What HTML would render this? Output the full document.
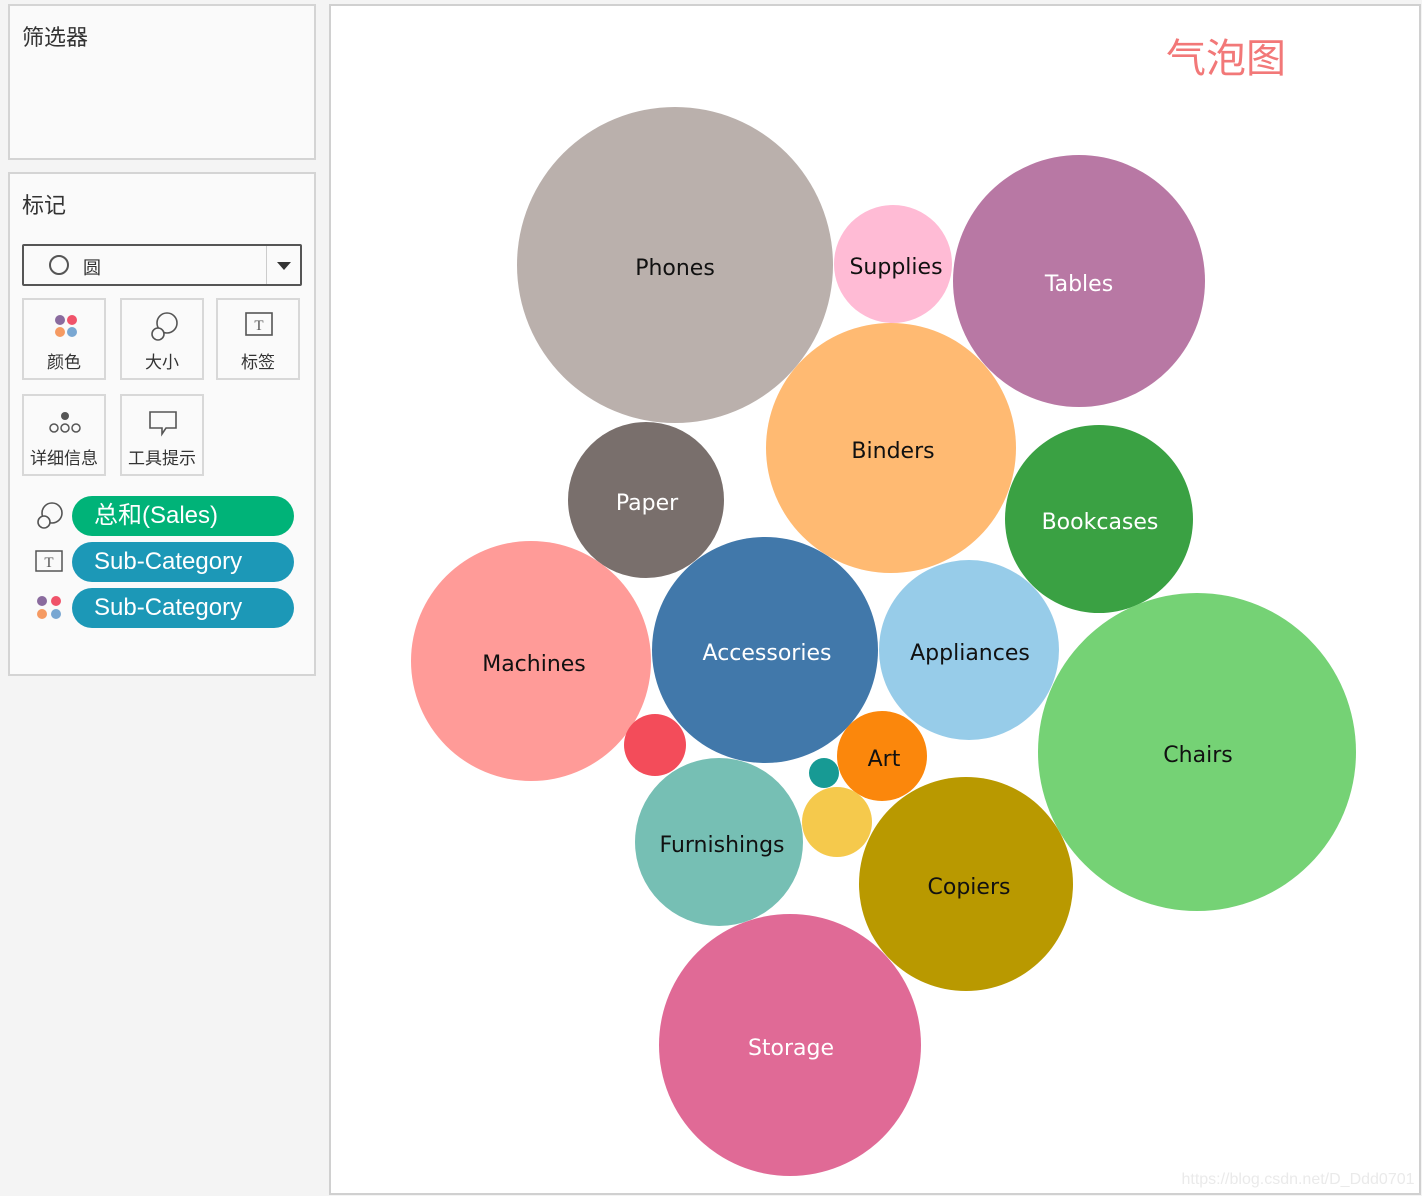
<!DOCTYPE html>
<html><head><meta charset="utf-8"><style>
body{margin:0;width:1422px;height:1196px;background:#f4f4f4;position:relative;overflow:hidden;font-family:"Liberation Sans","Noto Sans CJK SC",sans-serif;color:#333}
.box{position:absolute;background:#fafafa;border:2px solid #d4d4d4;box-sizing:border-box}
.t{position:absolute;font-size:22px;color:#333}
.card{position:absolute;width:84px;height:82px;border:2px solid #d8d8d8;box-sizing:border-box;background:#fafafa;text-align:center;font-size:17px}
.card span{position:absolute;left:0;right:0;top:53px;line-height:20px}
.card svg{position:absolute;left:22px;top:8px}
.pill{position:absolute;left:72px;width:222px;height:40px;border-radius:20px;color:#fff;font-size:24px;line-height:40px;padding-left:22px;box-sizing:border-box}
.chart{position:absolute;left:329px;top:4px;width:1092px;height:1191px;background:#fff;border:2px solid #d0d0d0;box-sizing:border-box}
</style></head><body>
<div class="box" style="left:8px;top:4px;width:308px;height:156px"></div>
<div class="t" style="left:22px;top:20px">筛选器</div>
<div class="box" style="left:8px;top:172px;width:308px;height:504px"></div>
<div class="t" style="left:22px;top:188px">标记</div>
<div style="position:absolute;left:22px;top:244px;width:280px;height:42px;border:2px solid #555;box-sizing:border-box;border-radius:2px;background:#fafafa">
<div style="position:absolute;left:25px;top:9px;width:16px;height:16px;border:2px solid #555;border-radius:50%"></div>
<div style="position:absolute;left:59px;top:8px;font-size:18px">圆</div>
<div style="position:absolute;left:242px;top:0;width:1px;height:38px;background:#ccc"></div>
<div style="position:absolute;left:253px;top:16px;border-left:7px solid transparent;border-right:7px solid transparent;border-top:8px solid #333"></div>
</div>
<div class="card" style="left:22px;top:298px"><svg width="40" height="40"><circle cx="14" cy="12" r="5" fill="#8a6b9e"/><circle cx="26" cy="12" r="5" fill="#f0536a"/><circle cx="14" cy="24" r="5" fill="#f59a62"/><circle cx="26" cy="24" r="5" fill="#79a7d2"/></svg><span>颜色</span></div>
<div class="card" style="left:120px;top:298px"><svg width="40" height="40"><circle cx="23" cy="15" r="10" fill="none" stroke="#555" stroke-width="1.6"/><circle cx="14" cy="26" r="6" fill="#fafafa" stroke="#555" stroke-width="1.6"/></svg><span>大小</span></div>
<div class="card" style="left:216px;top:298px"><svg width="40" height="40"><rect x="6" y="5" width="26" height="22" fill="none" stroke="#555" stroke-width="1.6"/><text x="19" y="22" font-size="15" text-anchor="middle" fill="#555" font-family="Liberation Serif">T</text></svg><span>标签</span></div>
<div class="card" style="left:22px;top:394px"><svg width="40" height="40"><circle cx="19" cy="12" r="4" fill="#555"/><circle cx="8" cy="24" r="4" fill="none" stroke="#555" stroke-width="1.5"/><circle cx="19" cy="24" r="4" fill="none" stroke="#555" stroke-width="1.5"/><circle cx="30" cy="24" r="4" fill="none" stroke="#555" stroke-width="1.5"/></svg><span>详细信息</span></div>
<div class="card" style="left:120px;top:394px"><svg width="40" height="40"><path d="M6 8h26v16H22l-4 6v-6H6z" fill="none" stroke="#555" stroke-width="1.6"/></svg><span>工具提示</span></div>
<svg style="position:absolute;left:34px;top:500px" width="34" height="34"><circle cx="18" cy="13" r="10" fill="none" stroke="#555" stroke-width="1.6"/><circle cx="10" cy="22" r="6" fill="#fafafa" stroke="#555" stroke-width="1.6"/></svg>
<div class="pill" style="top:496px;background:#00b378">总和(Sales)</div>
<svg style="position:absolute;left:34px;top:548px" width="34" height="28"><rect x="2" y="3" width="26" height="20" fill="none" stroke="#555" stroke-width="1.5"/><text x="15" y="19" font-size="15" text-anchor="middle" fill="#555" font-family="Liberation Serif">T</text></svg>
<div class="pill" style="top:542px;background:#1c98b7">Sub-Category</div>
<svg style="position:absolute;left:34px;top:592px" width="34" height="32"><circle cx="8" cy="9" r="5" fill="#8a6b9e"/><circle cx="22" cy="9" r="5" fill="#f0536a"/><circle cx="8" cy="22" r="5" fill="#f59a62"/><circle cx="22" cy="22" r="5" fill="#79a7d2"/></svg>
<div class="pill" style="top:588px;background:#1c98b7">Sub-Category</div>
<div class="chart"></div>
<svg style="position:absolute;left:0;top:0" width="1422" height="1196" font-family="DejaVu Sans, Liberation Sans, sans-serif" font-size="22" text-anchor="middle">
<text x="1226" y="72" font-size="40" fill="#f27878" font-family="Liberation Sans, Noto Sans CJK SC, sans-serif">气泡图</text>
<circle cx="675" cy="265" r="158" fill="#bab0ac"/><text x="675" y="275" fill="#111">Phones</text>
<circle cx="893" cy="264" r="59" fill="#ffbbd5"/><text x="896" y="274" fill="#111">Supplies</text>
<circle cx="1079" cy="281" r="126" fill="#b878a4"/><text x="1079" y="291" fill="#fff">Tables</text>
<circle cx="891" cy="448" r="125" fill="#ffba72"/><text x="893" y="458" fill="#111">Binders</text>
<circle cx="646" cy="500" r="78" fill="#796f6c"/><text x="647" y="510" fill="#fff">Paper</text>
<circle cx="1099" cy="519" r="94" fill="#3aa143"/><text x="1100" y="529" fill="#fff">Bookcases</text>
<circle cx="531" cy="661" r="120" fill="#ff9b98"/><text x="534" y="671" fill="#111">Machines</text>
<circle cx="765" cy="650" r="113" fill="#4178aa"/><text x="767" y="660" fill="#fff">Accessories</text>
<circle cx="969" cy="650" r="90" fill="#97cce9"/><text x="970" y="660" fill="#111">Appliances</text>
<circle cx="1197" cy="752" r="159" fill="#75d275"/><text x="1198" y="762" fill="#111">Chairs</text>
<circle cx="655" cy="745" r="31" fill="#f34c5a"/>
<circle cx="882" cy="756" r="45" fill="#fb870c"/><text x="884" y="766" fill="#111">Art</text>
<circle cx="824" cy="773" r="15" fill="#179a94"/>
<circle cx="837" cy="822" r="35" fill="#f5c94c"/>
<circle cx="719" cy="842" r="84" fill="#76bfb4"/><text x="722" y="852" fill="#111">Furnishings</text>
<circle cx="966" cy="884" r="107" fill="#b99900"/><text x="969" y="894" fill="#111">Copiers</text>
<circle cx="790" cy="1045" r="131" fill="#e06a96"/><text x="791" y="1055" fill="#fff">Storage</text>
<text x="1298" y="1184" font-size="16" fill="#eaeaea" font-family="Liberation Sans, sans-serif">https://blog.csdn.net/D_Ddd0701</text>
</svg>
</body></html>
